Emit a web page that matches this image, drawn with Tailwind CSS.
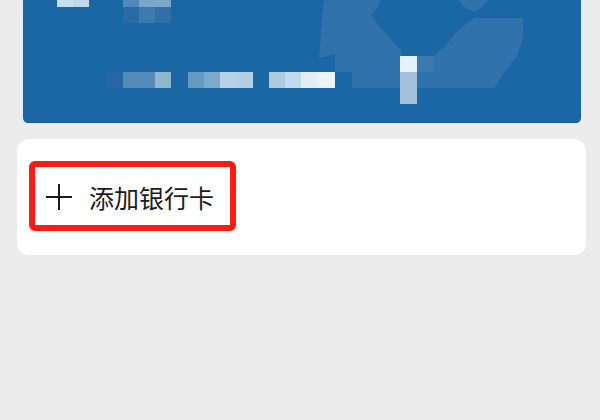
<!DOCTYPE html>
<html lang="zh-CN">
<head>
<meta charset="utf-8">
<meta name="viewport" content="width=device-width, initial-scale=1">
<title>银行卡</title>
<script src="https://cdn.jsdelivr.net/npm/@tailwindcss/browser@4"></script>
</head>
<body class="min-h-screen bg-[#ececec] font-['Noto_Sans_CJK_SC',sans-serif] text-[#1c1c1c]">
<main class="flex flex-col gap-4 pr-3.5 pl-[17px]">
  <section class="mr-[5px] ml-1.5 overflow-hidden rounded-b-[5px] bg-[#1b66a4]">
    <svg class="block h-auto w-full" viewBox="23 0 558 123" aria-hidden="true">
      <!-- bank emblem watermark -->
      <g fill="#2f72ac">
        <path d="M324 0H381L378 7L371 15L379 26L401 50V56H434L447 44L456 32L474 18H523V38L517 56L503 74L495 88H352V72H335V54L319 58L321 30Z"/>
        <path d="M458 0H488L482 7L475 12L465 8Z"/>
      </g>
      <path fill="#3a7ab0" d="M417 56H434V72H417Z"/>
      <path fill="#25649f" d="M23 0H25L23 10Z"/>
      <!-- masked card details -->
      <g shape-rendering="crispEdges">
        <path fill="#c8e0ee" d="M57 0H73V7H57Z"/>
        <path fill="#bfdbea" d="M73 0H89V7H73Z"/>
        <path fill="#5389b8" d="M123 0H139V7H123Z"/>
        <path fill="#78a7ca" d="M139 0H171V7H139Z"/>
        <path fill="#286ba7" d="M123 7H139V23H123Z"/>
        <path fill="#3b7bb0" d="M139 7H155V23H139Z"/>
        <path fill="#316fa9" d="M155 7H171V23H155Z"/>
        <path fill="#2467a7" d="M107 72H123V88H107Z"/>
        <path fill="#558ab9" d="M123 72H155V88H123Z"/>
        <path fill="#8db7cd" d="M155 72H171V88H155Z"/>
        <path fill="#649abf" d="M188 72H204V88H188Z"/>
        <path fill="#7caacb" d="M204 72H220V88H204Z"/>
        <path fill="#b6d3e5" d="M220 72H237V88H220Z"/>
        <path fill="#b1cee2" d="M237 72H253V88H237Z"/>
        <path fill="#abcbe0" d="M269 72H285V88H269Z"/>
        <path fill="#c0dbeb" d="M285 72H301V88H285Z"/>
        <path fill="#e2edf6" d="M301 72H318V88H301Z"/>
        <path fill="#eef3fa" d="M318 72H335V88H318Z"/>
        <path fill="#e3f3fc" d="M400 56H417V72H400Z"/>
        <path fill="#a2bfdb" d="M400 72H417V104H400Z"/>
      </g>
      <path fill="#20598d" d="M23 122H581V123H23Z"/>
    </svg>
  </section>
  <section class="rounded-xl bg-white px-3 pt-[22px] pb-6">
    <button type="button" class="flex h-[70px] items-center gap-[17px] rounded-md border-6 border-[#fb1d12] pt-0.5 pr-4 pl-[11px]">
      <svg class="size-[26px]" viewBox="0 0 26 26" fill="none" stroke="#1c1c1c" stroke-width="2" aria-hidden="true">
        <path d="M0 13H26M13 0V26"/>
      </svg>
      <span class="text-[25px] leading-9">添加银行卡</span>
    </button>
  </section>
</main>
</body>
</html>
